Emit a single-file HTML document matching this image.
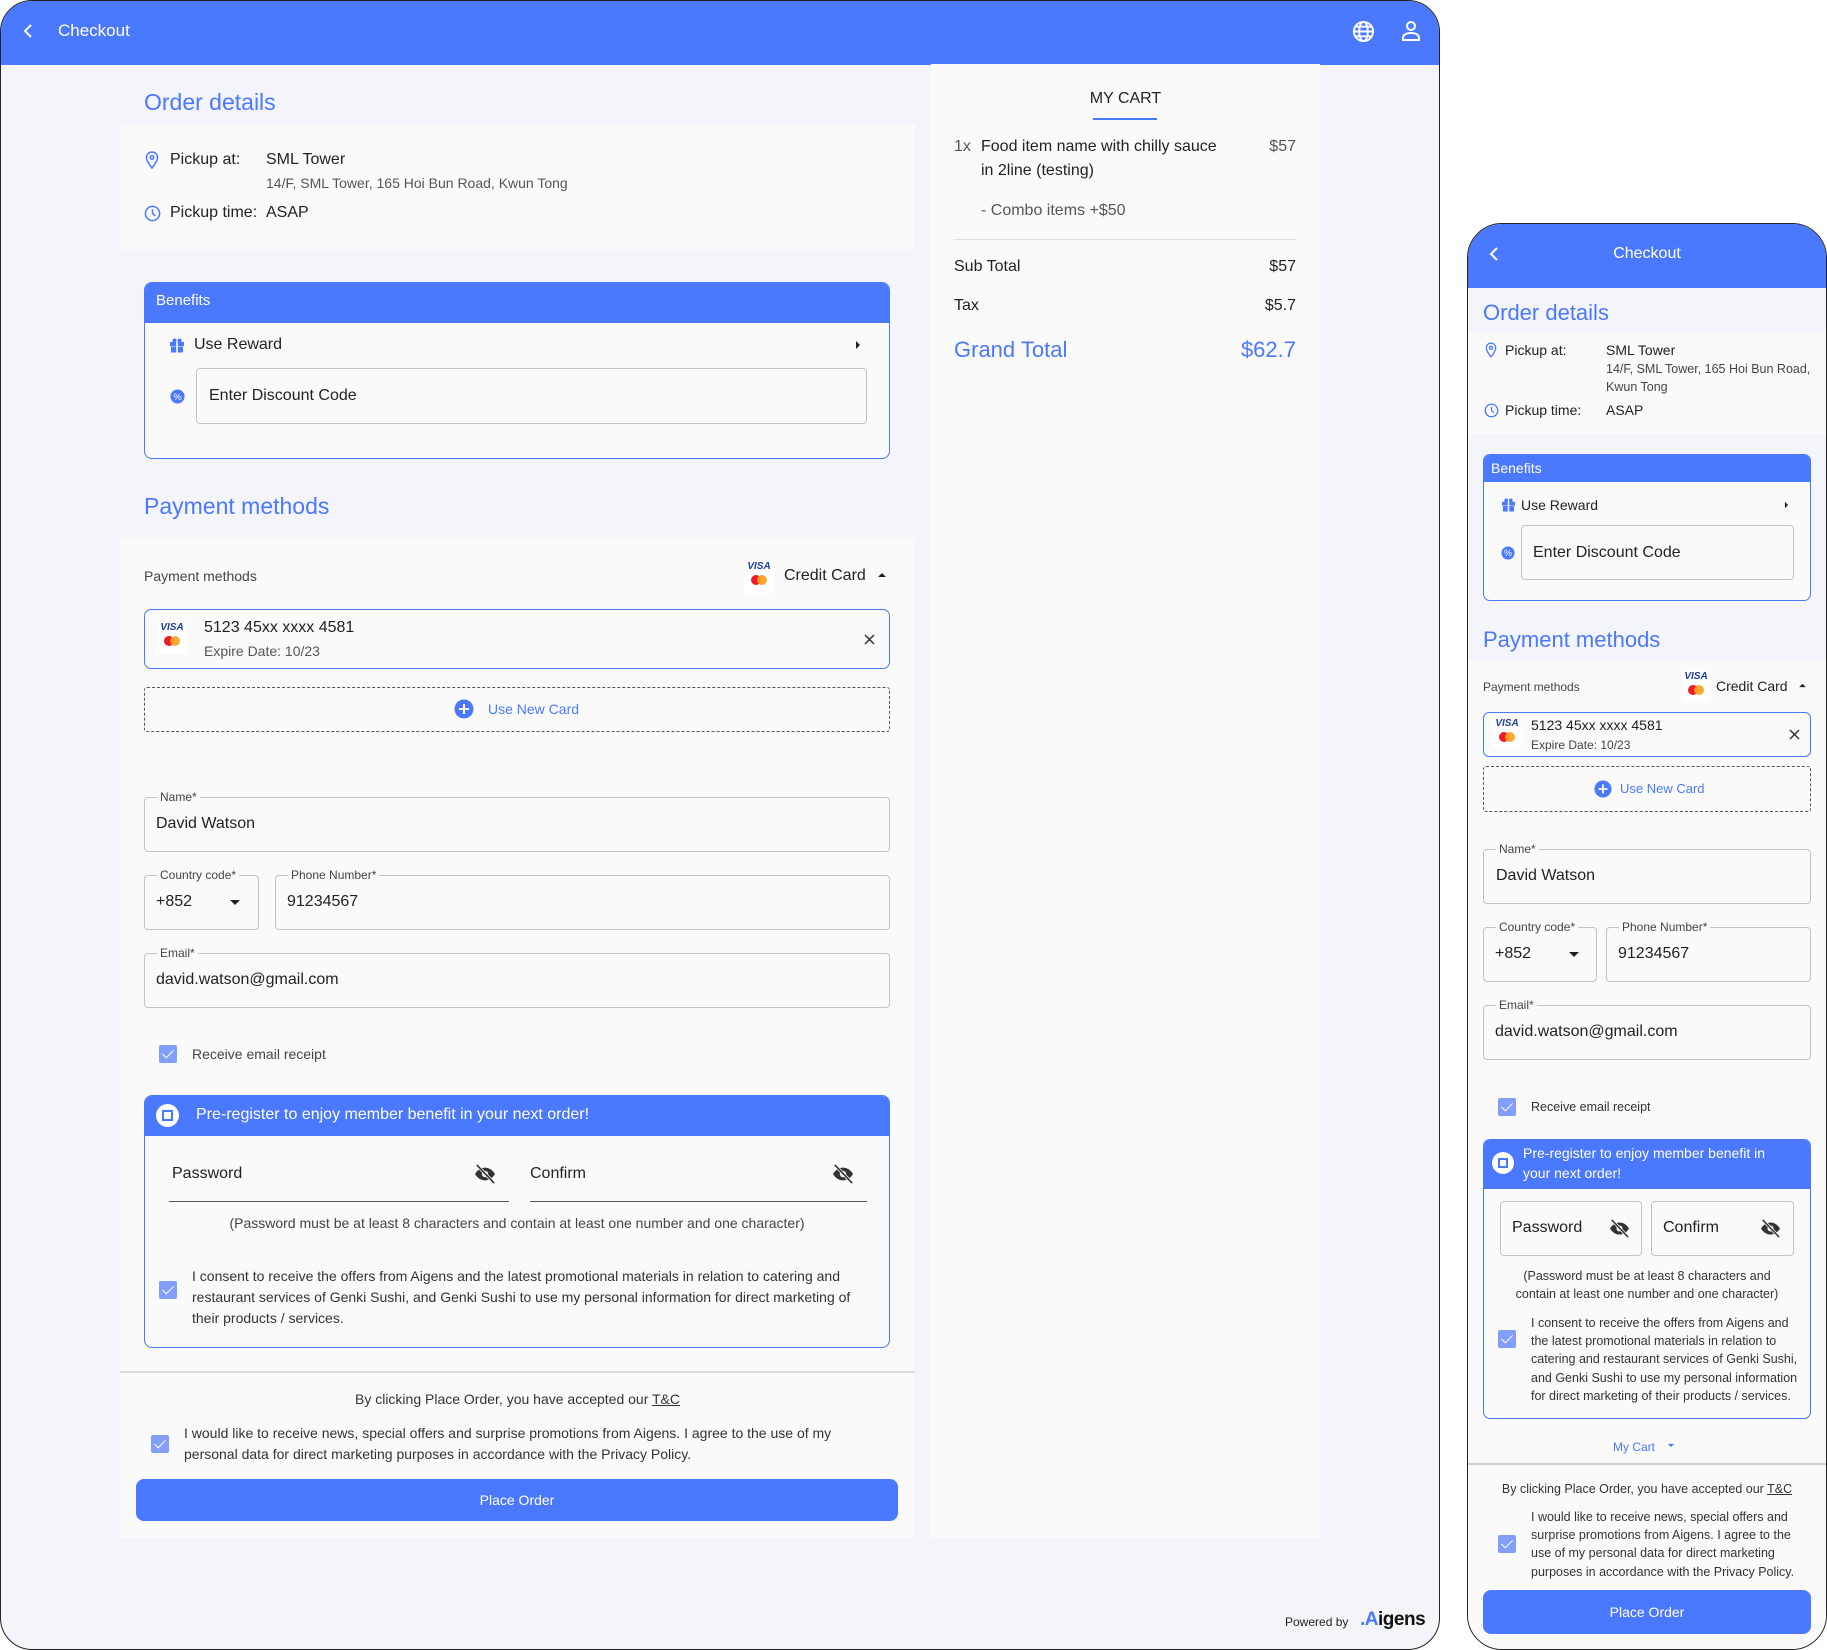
<!DOCTYPE html>
<html><head><meta charset="utf-8"><style>
*{box-sizing:border-box;margin:0;padding:0}
body{width:1827px;height:1650px;background:#fff;font-family:"Liberation Sans",sans-serif;color:#222;position:relative;overflow:hidden}
.a{position:absolute}
.t{position:absolute;white-space:nowrap;line-height:20px}
.blue{color:#4a78ff}
.box{position:absolute;border:1px solid #c4c4c4;border-radius:4px;background:#fafafa}
.lbl{position:absolute;font-size:12px;color:#444;background:#fafafa;padding:0 3px;line-height:14px}
.cb{position:absolute;width:18px;height:18px;background:#829ffd;border-radius:2px}
.cb:after{content:"";position:absolute;left:6px;top:2px;width:5px;height:10px;border:solid #fff;border-width:0 1.6px 1.6px 0;transform:rotate(45deg)}
.btn{position:absolute;background:#4a78ff;border-radius:8px;color:#fff;font-size:14px;display:flex;align-items:center;justify-content:center}
</style></head><body>

<!-- MAIN FRAME -->
<div class="a" style="left:0;top:0;width:1440px;height:1650px;border:1px solid #222;border-radius:32px;background:#f4f5fa;overflow:hidden">
 <div class="a" style="left:0;top:0;width:1440px;height:64px;background:#4a78ff"></div>
</div>
<svg class="a" style="left:22px;top:23px" width="14" height="16" viewBox="0 0 14 16"><path d="M9 2 L3 8 L9 14" stroke="#fff" stroke-width="2" fill="none"/></svg>
<div class="t" style="left:58px;top:21px;font-size:17px;color:#fff">Checkout</div>
<svg class="a" style="left:1352px;top:20px" width="23" height="23" viewBox="0 0 24 24" fill="none" stroke="#fff" stroke-width="2"><circle cx="12" cy="12" r="10"/><ellipse cx="12" cy="12" rx="4.5" ry="10"/><path d="M2 12h20M4 7h16M4 17h16"/></svg>
<svg class="a" style="left:1401px;top:20px" width="20" height="22" viewBox="0 0 20 22" fill="none" stroke="#fff" stroke-width="2"><circle cx="10" cy="6" r="4"/><path d="M2 20v-2c0-3 3-5 8-5s8 2 8 5v2z"/></svg>

<!-- left column -->
<div class="t blue" style="left:144px;top:89px;font-size:23px;line-height:26px">Order details</div>
<div class="a" style="left:120px;top:125px;width:795px;height:124px;background:#fafafa"></div>
<svg class="a" style="left:145px;top:151px" width="14" height="18" viewBox="0 0 14 18" fill="none" stroke="#4a78ff" stroke-width="1.5"><path d="M7 17C3 12 1.5 9 1.5 6.5a5.5 5.5 0 0 1 11 0C12.5 9 11 12 7 17z"/><circle cx="7" cy="6.5" r="1.8"/></svg>
<div class="t" style="left:170px;top:150px;font-size:16px">Pickup at:</div>
<div class="t" style="left:266px;top:150px;font-size:16px">SML Tower</div>
<div class="t" style="left:266px;top:173px;font-size:14px;color:#555">14/F, SML Tower, 165 Hoi Bun Road, Kwun Tong</div>
<svg class="a" style="left:144px;top:205px" width="17" height="17" viewBox="0 0 18 18" fill="none" stroke="#4a78ff" stroke-width="1.6"><circle cx="9" cy="9" r="7.5"/><path d="M9 4.5V9l3 2.5"/></svg>
<div class="t" style="left:170px;top:203px;font-size:16px">Pickup time:</div>
<div class="t" style="left:266px;top:203px;font-size:16px">ASAP</div>

<div class="a" style="left:144px;top:282px;width:746px;height:177px;border:1.5px solid #4a78ff;border-radius:8px;background:#fafafa;overflow:hidden"><div style="height:40px;background:#4a78ff"></div></div>
<div class="t" style="left:156px;top:291px;font-size:15px;color:#fff">Benefits</div>
<svg class="a" style="left:170px;top:338px" width="14" height="15" viewBox="0 0 14 15" fill="#4a78ff"><rect x="0" y="4" width="14" height="4"/><rect x="1" y="8.5" width="12" height="6"/><rect x="6.2" y="3" width="1.6" height="12" fill="#fff"/><circle cx="4.5" cy="2.5" r="2"/><circle cx="9.5" cy="2.5" r="2"/></svg>
<div class="t" style="left:194px;top:335px;font-size:16px">Use Reward</div>
<svg class="a" style="left:855px;top:340px" width="6" height="10" viewBox="0 0 6 10"><path d="M1 1l4 4-4 4z" fill="#222"/></svg>
<svg class="a" style="left:170px;top:389px" width="15" height="15" viewBox="0 0 16 16"><circle cx="8" cy="8" r="7.5" fill="#4a78ff"/><text x="8" y="11.5" font-size="10" fill="#fff" text-anchor="middle" font-family="Liberation Sans">%</text></svg>
<div class="box" style="left:196px;top:368px;width:671px;height:56px"></div>
<div class="t" style="left:209px;top:386px;font-size:16px">Enter Discount Code</div>

<div class="t blue" style="left:144px;top:493px;font-size:23px;line-height:26px">Payment methods</div>
<div class="a" style="left:120px;top:537px;width:795px;height:1001px;background:#fafafa"></div>
<div class="a" style="left:120px;top:1371px;width:795px;height:2px;background:#d9d9d9"></div>
<div class="t" style="left:144px;top:566px;font-size:14px;color:#444">Payment methods</div>
<div class="a" style="left:744px;top:561px;width:30px;height:32px;background:#fff"><div style="font:italic 900 10px 'Liberation Sans';color:#1a3f99;text-align:center;line-height:12px">VISA</div><svg width="30" height="14" viewBox="0 0 30 14"><circle cx="12" cy="7" r="5" fill="#eb1c25"/><circle cx="18" cy="7" r="5" fill="#f9a11b" fill-opacity=".9"/></svg></div>
<div class="t" style="left:784px;top:566px;font-size:16px">Credit Card</div>
<svg class="a" style="left:877px;top:572px" width="10" height="6" viewBox="0 0 10 6"><path d="M1 5l4-4 4 4z" fill="#222"/></svg>

<div class="a" style="left:144px;top:609px;width:746px;height:60px;border:1.3px solid #4a78ff;border-radius:7px;background:#fafafa"></div>
<div class="a" style="left:157px;top:622px;width:30px;height:32px;background:#fff"><div style="font:italic 900 10px 'Liberation Sans';color:#1a3f99;text-align:center;line-height:12px">VISA</div><svg width="30" height="14" viewBox="0 0 30 14"><circle cx="12" cy="7" r="5" fill="#eb1c25"/><circle cx="18" cy="7" r="5" fill="#f9a11b" fill-opacity=".9"/></svg></div>
<div class="t" style="left:204px;top:618px;font-size:16px">5123 45xx xxxx 4581</div>
<div class="t" style="left:204px;top:641px;font-size:14px;color:#555">Expire Date: 10/23</div>
<svg class="a" style="left:864px;top:634px" width="11" height="11" viewBox="0 0 11 11" stroke="#333" stroke-width="1.5"><path d="M1 1l9 9M10 1l-9 9"/></svg>
<div class="a" style="left:144px;top:687px;width:746px;height:45px;border:1.3px dashed #555;border-radius:3px"></div>
<svg class="a" style="left:454px;top:699px" width="20" height="20" viewBox="0 0 20 20"><circle cx="10" cy="10" r="9.5" fill="#4a78ff"/><path d="M10 5v10M5 10h10" stroke="#fff" stroke-width="2"/></svg>
<div class="t blue" style="left:488px;top:699px;font-size:14px">Use New Card</div>

<div class="box" style="left:144px;top:797px;width:746px;height:55px"></div><div class="lbl" style="left:157px;top:790px">Name*</div>
<div class="t" style="left:156px;top:814px;font-size:16px">David Watson</div>
<div class="box" style="left:144px;top:875px;width:115px;height:55px"></div><div class="lbl" style="left:157px;top:868px">Country code*</div>
<div class="t" style="left:156px;top:892px;font-size:16px">+852</div>
<svg class="a" style="left:229px;top:899px" width="12" height="7" viewBox="0 0 12 7"><path d="M1 1h10L6 6z" fill="#222"/></svg>
<div class="box" style="left:275px;top:875px;width:615px;height:55px"></div><div class="lbl" style="left:288px;top:868px">Phone Number*</div>
<div class="t" style="left:287px;top:892px;font-size:16px">91234567</div>
<div class="box" style="left:144px;top:953px;width:746px;height:55px"></div><div class="lbl" style="left:157px;top:946px">Email*</div>
<div class="t" style="left:156px;top:970px;font-size:16px">david.watson@gmail.com</div>

<div class="cb" style="left:159px;top:1045px"></div>
<div class="t" style="left:192px;top:1044px;font-size:14px;color:#444">Receive email receipt</div>

<div class="a" style="left:144px;top:1095px;width:746px;height:253px;border:1.3px solid #4a78ff;border-radius:8px;background:#fafafa;overflow:hidden"><div style="height:40px;background:#4a78ff"></div></div>
<div class="a" style="left:156px;top:1104px;width:23px;height:23px;border-radius:50%;background:#fff"><div style="margin:6px;width:11px;height:11px;border:2.5px solid #4a78ff"></div></div>
<div class="t" style="left:196px;top:1105px;font-size:16px;color:#fff">Pre-register to enjoy member benefit in your next order!</div>
<div class="t" style="left:172px;top:1164px;font-size:16px">Password</div>
<div class="t" style="left:530px;top:1164px;font-size:16px">Confirm</div>
<svg class="a" style="left:474px;top:1164px" width="22" height="20" viewBox="0 0 24 22"><path d="M1 11c3-5 7-7 11-7s8 2 11 7c-3 5-7 7-11 7S4 16 1 11z" fill="#333"/><circle cx="12" cy="11" r="3.5" fill="#fafafa"/><path d="M3 1l19 20" stroke="#fafafa" stroke-width="3.5"/><path d="M3 1l19 20" stroke="#333" stroke-width="1.8"/></svg>
<svg class="a" style="left:832px;top:1164px" width="22" height="20" viewBox="0 0 24 22"><path d="M1 11c3-5 7-7 11-7s8 2 11 7c-3 5-7 7-11 7S4 16 1 11z" fill="#333"/><circle cx="12" cy="11" r="3.5" fill="#fafafa"/><path d="M3 1l19 20" stroke="#fafafa" stroke-width="3.5"/><path d="M3 1l19 20" stroke="#333" stroke-width="1.8"/></svg>
<div class="a" style="left:169px;top:1201px;width:340px;height:1px;background:#555"></div>
<div class="a" style="left:530px;top:1201px;width:337px;height:1px;background:#555"></div>
<div class="t" style="left:144px;width:746px;text-align:center;top:1213px;font-size:14px;color:#444">(Password must be at least 8 characters and contain at least one number and one character)</div>
<div class="cb" style="left:159px;top:1281px"></div>
<div class="a" style="left:192px;top:1266px;width:672px;font-size:14px;line-height:21px;color:#333">I consent to receive the offers from Aigens and the latest promotional materials in relation to catering and restaurant services of Genki Sushi, and Genki Sushi to use my personal information for direct marketing of their products / services.</div>

<div class="t" style="left:120px;width:795px;text-align:center;top:1389px;font-size:14px;color:#333">By clicking Place Order, you have accepted our <u>T&amp;C</u></div>
<div class="cb" style="left:151px;top:1435px"></div>
<div class="a" style="left:184px;top:1423px;width:700px;font-size:14px;line-height:21px;color:#333">I would like to receive news, special offers and surprise promotions from Aigens. I agree to the use of my personal data for direct marketing purposes in accordance with the Privacy Policy.</div>
<div class="btn" style="left:136px;top:1479px;width:762px;height:42px">Place Order</div>

<!-- cart -->
<div class="a" style="left:931px;top:64px;width:389px;height:1474px;background:#fafafa"></div>
<div class="t" style="left:931px;width:389px;text-align:center;top:89px;font-size:16px">MY CART</div>
<div class="a" style="left:1093px;top:118px;width:64px;height:2px;background:#4a78ff"></div>
<div class="t" style="left:954px;top:137px;font-size:16px;color:#555">1x</div>
<div class="t" style="left:981px;top:137px;font-size:16px">Food item name with chilly sauce</div>
<div class="t" style="left:981px;top:161px;font-size:16px">in 2line (testing)</div>
<div class="t" style="left:1226px;width:70px;text-align:right;top:137px;font-size:16px;color:#555">$57</div>
<div class="t" style="left:981px;top:201px;font-size:16px;color:#555">- Combo items +$50</div>
<div class="a" style="left:954px;top:239px;width:342px;height:1px;background:#e3e3e3"></div>
<div class="t" style="left:954px;top:257px;font-size:16px">Sub Total</div>
<div class="t" style="left:1196px;width:100px;text-align:right;top:257px;font-size:16px">$57</div>
<div class="t" style="left:954px;top:296px;font-size:16px">Tax</div>
<div class="t" style="left:1196px;width:100px;text-align:right;top:296px;font-size:16px">$5.7</div>
<div class="t blue" style="left:954px;top:337px;font-size:22px;line-height:26px">Grand Total</div>
<div class="t blue" style="left:1196px;width:100px;text-align:right;top:337px;font-size:22px;line-height:26px">$62.7</div>

<div class="t" style="left:1285px;top:1612px;font-size:12px;color:#222">Powered by</div>
<div class="t" style="left:1360px;top:1610px;font-size:19px;font-weight:bold;letter-spacing:-0.5px;color:#111"><span style="color:#4a78ff">.</span><span style="color:#4a78ff">A</span>igens</div>

<!-- MOBILE -->
<div class="a" style="left:1467px;top:223px;width:360px;height:1427px;border:1px solid #222;border-radius:35px;background:#f4f5fa;overflow:hidden">
 <div class="a" style="left:0;top:0;width:360px;height:64px;background:#4a78ff"></div>
 <div class="a" style="left:0;top:107px;width:360px;height:103px;background:#fafafa"></div>
 <div class="a" style="left:0;top:437px;width:360px;height:800px;background:#fafafa"></div>
 <div class="a" style="left:0;top:1239px;width:360px;height:2px;background:#cfcfcf"></div>
 <div class="a" style="left:0;top:1241px;width:360px;height:190px;background:#fafafa"></div>
</div>
<svg class="a" style="left:1489px;top:246px" width="12" height="16" viewBox="0 0 12 16"><path d="M8 2L2 8l6 6" stroke="#fff" stroke-width="2" fill="none"/></svg>
<div class="t" style="left:1467px;width:360px;text-align:center;top:244px;font-size:16px;color:#fff">Checkout</div>
<div class="t blue" style="left:1483px;top:300px;font-size:22px;line-height:26px">Order details</div>
<svg class="a" style="left:1485px;top:342px" width="12" height="16" viewBox="0 0 14 18" fill="none" stroke="#4a78ff" stroke-width="1.5"><path d="M7 17C3 12 1.5 9 1.5 6.5a5.5 5.5 0 0 1 11 0C12.5 9 11 12 7 17z"/><circle cx="7" cy="6.5" r="1.8"/></svg>
<div class="t" style="left:1505px;top:340px;font-size:14px">Pickup at:</div>
<div class="t" style="left:1606px;top:340px;font-size:14px">SML Tower</div>
<div class="t" style="left:1606px;top:359px;font-size:12.5px;color:#444">14/F, SML Tower, 165 Hoi Bun Road,</div>
<div class="t" style="left:1606px;top:377px;font-size:12.5px;color:#444">Kwun Tong</div>
<svg class="a" style="left:1484px;top:403px" width="15" height="15" viewBox="0 0 18 18" fill="none" stroke="#4a78ff" stroke-width="1.6"><circle cx="9" cy="9" r="7.5"/><path d="M9 4.5V9l3 2.5"/></svg>
<div class="t" style="left:1505px;top:400px;font-size:14px">Pickup time:</div>
<div class="t" style="left:1606px;top:400px;font-size:14px">ASAP</div>

<div class="a" style="left:1483px;top:454px;width:328px;height:147px;border:1.3px solid #4a78ff;border-radius:7px;background:#fafafa;overflow:hidden"><div style="height:27px;background:#4a78ff"></div></div>
<div class="t" style="left:1491px;top:458px;font-size:14px;color:#fff">Benefits</div>
<svg class="a" style="left:1502px;top:498px" width="13" height="14" viewBox="0 0 14 15" fill="#4a78ff"><rect x="0" y="4" width="14" height="4"/><rect x="1" y="8.5" width="12" height="6"/><rect x="6.2" y="3" width="1.6" height="12" fill="#fff"/><circle cx="4.5" cy="2.5" r="2"/><circle cx="9.5" cy="2.5" r="2"/></svg>
<div class="t" style="left:1521px;top:495px;font-size:14px">Use Reward</div>
<svg class="a" style="left:1784px;top:501px" width="5" height="8" viewBox="0 0 6 10"><path d="M1 1l4 4-4 4z" fill="#222"/></svg>
<svg class="a" style="left:1501px;top:546px" width="14" height="14" viewBox="0 0 16 16"><circle cx="8" cy="8" r="7.5" fill="#4a78ff"/><text x="8" y="11.5" font-size="10" fill="#fff" text-anchor="middle" font-family="Liberation Sans">%</text></svg>
<div class="box" style="left:1521px;top:525px;width:273px;height:55px"></div>
<div class="t" style="left:1533px;top:543px;font-size:16px">Enter Discount Code</div>

<div class="t blue" style="left:1483px;top:627px;font-size:22px;line-height:26px">Payment methods</div>
<div class="t" style="left:1483px;top:677px;font-size:12px;color:#444">Payment methods</div>
<div class="a" style="left:1682px;top:671px;width:28px;height:30px;background:#fff"><div style="font:italic 900 10px 'Liberation Sans';color:#1a3f99;text-align:center;line-height:12px">VISA</div><svg width="28" height="14" viewBox="0 0 28 14"><circle cx="11" cy="7" r="5" fill="#eb1c25"/><circle cx="17" cy="7" r="5" fill="#f9a11b" fill-opacity=".9"/></svg></div>
<div class="t" style="left:1716px;top:676px;font-size:14px">Credit Card</div>
<svg class="a" style="left:1798px;top:683px" width="9" height="5" viewBox="0 0 10 6"><path d="M1 5l4-4 4 4z" fill="#222"/></svg>
<div class="a" style="left:1483px;top:712px;width:328px;height:45px;border:1.3px solid #4a78ff;border-radius:6px;background:#fafafa"></div>
<div class="a" style="left:1493px;top:718px;width:28px;height:30px;background:#fff"><div style="font:italic 900 10px 'Liberation Sans';color:#1a3f99;text-align:center;line-height:12px">VISA</div><svg width="28" height="14" viewBox="0 0 28 14"><circle cx="11" cy="7" r="5" fill="#eb1c25"/><circle cx="17" cy="7" r="5" fill="#f9a11b" fill-opacity=".9"/></svg></div>
<div class="t" style="left:1531px;top:715px;font-size:14px">5123 45xx xxxx 4581</div>
<div class="t" style="left:1531px;top:735px;font-size:12px;color:#444">Expire Date: 10/23</div>
<svg class="a" style="left:1789px;top:729px" width="11" height="11" viewBox="0 0 11 11" stroke="#333" stroke-width="1.5"><path d="M1 1l9 9M10 1l-9 9"/></svg>
<div class="a" style="left:1483px;top:766px;width:328px;height:46px;border:1.3px dashed #555;border-radius:3px"></div>
<svg class="a" style="left:1594px;top:780px" width="18" height="18" viewBox="0 0 20 20"><circle cx="10" cy="10" r="9.5" fill="#4a78ff"/><path d="M10 5v10M5 10h10" stroke="#fff" stroke-width="2"/></svg>
<div class="t blue" style="left:1620px;top:779px;font-size:13px">Use New Card</div>

<div class="box" style="left:1483px;top:849px;width:328px;height:55px"></div><div class="lbl" style="left:1496px;top:842px">Name*</div>
<div class="t" style="left:1496px;top:866px;font-size:16px">David Watson</div>
<div class="box" style="left:1483px;top:927px;width:114px;height:55px"></div><div class="lbl" style="left:1496px;top:920px">Country code*</div>
<div class="t" style="left:1495px;top:944px;font-size:16px">+852</div>
<svg class="a" style="left:1568px;top:951px" width="12" height="7" viewBox="0 0 12 7"><path d="M1 1h10L6 6z" fill="#222"/></svg>
<div class="box" style="left:1606px;top:927px;width:205px;height:55px"></div><div class="lbl" style="left:1619px;top:920px">Phone Number*</div>
<div class="t" style="left:1618px;top:944px;font-size:16px">91234567</div>
<div class="box" style="left:1483px;top:1005px;width:328px;height:55px"></div><div class="lbl" style="left:1496px;top:998px">Email*</div>
<div class="t" style="left:1495px;top:1022px;font-size:16px">david.watson@gmail.com</div>
<div class="cb" style="left:1498px;top:1098px"></div>
<div class="t" style="left:1531px;top:1097px;font-size:12.5px;color:#333">Receive email receipt</div>

<div class="a" style="left:1483px;top:1139px;width:328px;height:280px;border:1.3px solid #4a78ff;border-radius:7px;background:#fafafa;overflow:hidden"><div style="height:49px;background:#4a78ff"></div></div>
<div class="a" style="left:1492px;top:1152px;width:22px;height:22px;border-radius:50%;background:#fff"><div style="margin:6px;width:10px;height:10px;border:2.5px solid #4a78ff"></div></div>
<div class="a" style="left:1523px;top:1143px;width:255px;font-size:14px;line-height:20px;color:#fff">Pre-register to enjoy member benefit in your next order!</div>
<div class="box" style="left:1500px;top:1201px;width:142px;height:55px"></div>
<div class="box" style="left:1651px;top:1201px;width:143px;height:55px"></div>
<div class="t" style="left:1512px;top:1218px;font-size:16px">Password</div>
<div class="t" style="left:1663px;top:1218px;font-size:16px">Confirm</div>
<svg class="a" style="left:1609px;top:1219px" width="21" height="19" viewBox="0 0 24 22"><path d="M1 11c3-5 7-7 11-7s8 2 11 7c-3 5-7 7-11 7S4 16 1 11z" fill="#333"/><circle cx="12" cy="11" r="3.5" fill="#fafafa"/><path d="M3 1l19 20" stroke="#fafafa" stroke-width="3.5"/><path d="M3 1l19 20" stroke="#333" stroke-width="1.8"/></svg>
<svg class="a" style="left:1760px;top:1219px" width="21" height="19" viewBox="0 0 24 22"><path d="M1 11c3-5 7-7 11-7s8 2 11 7c-3 5-7 7-11 7S4 16 1 11z" fill="#333"/><circle cx="12" cy="11" r="3.5" fill="#fafafa"/><path d="M3 1l19 20" stroke="#fafafa" stroke-width="3.5"/><path d="M3 1l19 20" stroke="#333" stroke-width="1.8"/></svg>
<div class="a" style="left:1510px;top:1267px;width:274px;text-align:center;font-size:12.5px;line-height:18px;color:#333">(Password must be at least 8 characters and contain at least one number and one character)</div>
<div class="cb" style="left:1498px;top:1330px"></div>
<div class="a" style="left:1531px;top:1314px;width:276px;font-size:12.5px;line-height:18.2px;color:#333">I consent to receive the offers from Aigens and the latest promotional materials in relation to catering and restaurant services of Genki Sushi, and Genki Sushi to use my personal information for direct marketing of their products / services.</div>
<div class="t blue" style="left:1613px;top:1437px;font-size:12px">My Cart</div>
<svg class="a" style="left:1667px;top:1443px" width="8" height="5" viewBox="0 0 10 6"><path d="M1 1h8L5 5z" fill="#4a78ff"/></svg>
<div class="t" style="left:1467px;width:360px;text-align:center;top:1479px;font-size:12.5px;color:#333">By clicking Place Order, you have accepted our <u>T&amp;C</u></div>
<div class="cb" style="left:1498px;top:1535px"></div>
<div class="a" style="left:1531px;top:1508px;width:280px;font-size:12.5px;line-height:18.2px;color:#333">I would like to receive news, special offers and surprise promotions from Aigens. I agree to the use of my personal data for direct marketing purposes in accordance with the Privacy Policy.</div>
<div class="btn" style="left:1483px;top:1590px;width:328px;height:44px">Place Order</div>
</body></html>
